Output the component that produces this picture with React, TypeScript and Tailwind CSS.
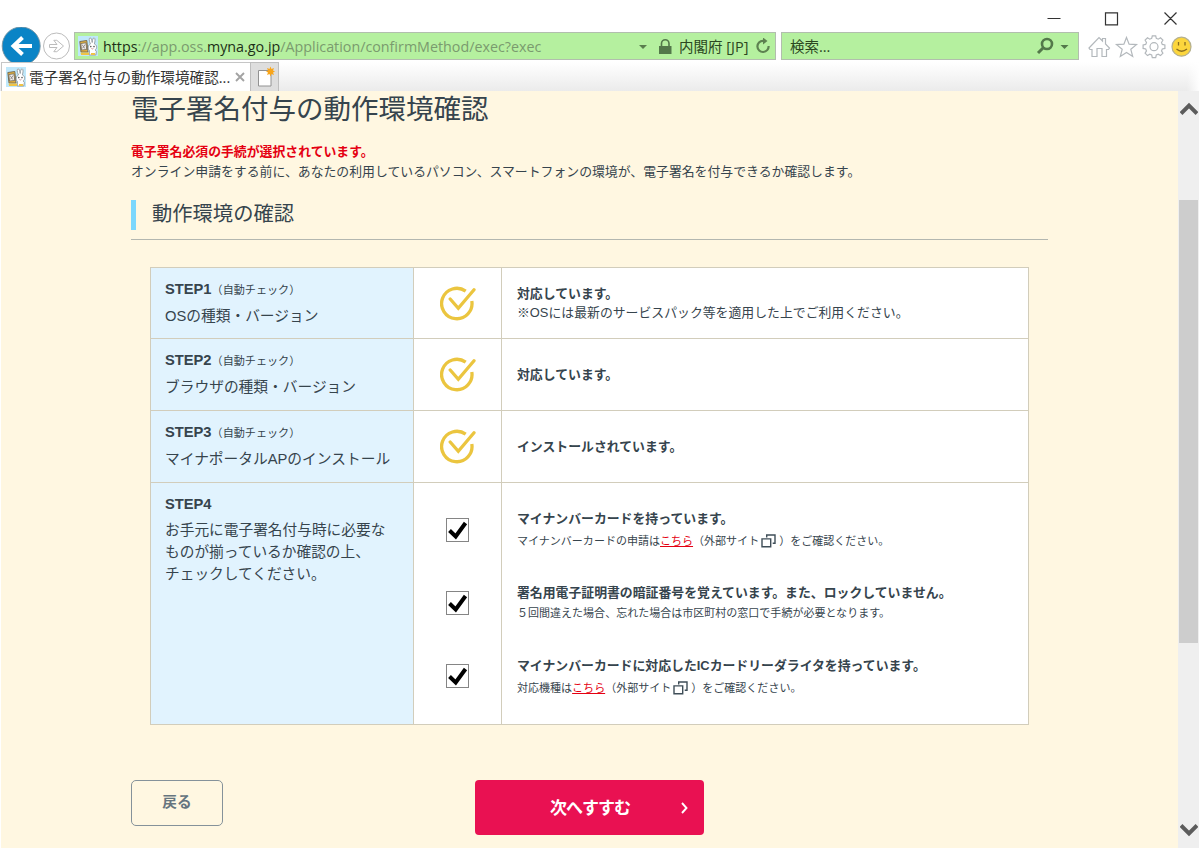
import React from "react";

const jp = "font-['Liberation_Sans','Noto_Sans_CJK_JP',sans-serif]";
const ui = "font-['Open_Sans','Noto_Sans_CJK_JP',sans-serif]";

function Favicon() {
  return (
    <svg width="20" height="20" viewBox="0 0 20 20" className="block shrink-0">
      <rect width="20" height="20" fill="#bfe8fb" />
      <path d="M1.800 5.500 8.800 4.500 10 16H3z" fill="#e9b43a" stroke="#6b6355" strokeWidth=".9" />
      <path d="M2.800 7.500 8 6.800l.700 6.700-5.200.500z" fill="#f3efec" stroke="#6b6355" strokeWidth=".8" />
      <path d="m4 8.500 2.800 4M7.300 8.300l-2.800 4" stroke="#8b8583" strokeWidth=".9" />
      <path d="M12.400 8C10.800 4.500 11 2 12 1.800c1.200-.200 1.900 2.400 2.200 4.700C14.400 4 15 1.600 16.200 1.900c1.300.400.900 3.600.200 6 2.600 1.200 3 4.400.800 6l1.200 1.600-.600 3.500h-6.600l.300-4.500c-2-1.300-1.700-5.200.900-6.500z" fill="#fff" stroke="#939a9e" strokeWidth=".9" />
      <circle cx="12.800" cy="10.600" r=".8" fill="#555" />
      <circle cx="16" cy="10.600" r=".8" fill="#555" />
      <path d="M13.400 12.500q1 .900 2 0" fill="none" stroke="#c07a80" strokeWidth=".8" />
      <path d="M2.500 16.500h8.500v2.500H3.200zM13 17h4v2h-4z" fill="#f0c445" />
    </svg>
  );
}

function DoneIcon() {
  return (
    <svg width="36" height="35" viewBox="0 0 36 35" className="block" fill="none" stroke="#ebc53f" strokeWidth="3.300" strokeLinecap="round" strokeLinejoin="miter">
      <path d="M25.700 5.200A15.200 15.200 0 1 0 31.800 15" strokeLinecap="butt" />
      <path d="m10.200 13 8.100 9.300L34 3.800" />
    </svg>
  );
}

function CheckedBox() {
  return (
    <div className="flex h-[24px] w-[23px] items-center justify-center border border-[#858585] bg-white">
      <svg width="21" height="22" viewBox="0 0 21 22" className="block">
        <path d="m2.500 11.500 6.200 6L18.500 4" fill="none" stroke="#000" strokeWidth="4" />
      </svg>
    </div>
  );
}

function External() {
  return (
    <svg width="15" height="14" viewBox="0 0 15 14" className="ml-[2px] mr-[3px] inline-block align-[-3px]" fill="none" stroke="#3f4e58" strokeWidth="1.400">
      <path d="M5.700 3.500V1h8.300v8.200h-2.300" />
      <path d="M1 4.900h8.700v7.900H1z" />
    </svg>
  );
}

function StepRow({ step, name, children }: { step: string; name: string; children: React.ReactNode }) {
  return (
    <>
      <div className="flex flex-col border-t border-[#d2cdbb] bg-[#e1f3fe] pl-[14px] pt-[9px]">
        <div className="flex h-[24px] items-center whitespace-nowrap">
          <b className="text-[14.700px]">{step}</b>
          <span className="pt-[2px] text-[11.100px] leading-[24px]">（自動チェック）</span>
        </div>
        <div className="mt-[3px] whitespace-nowrap text-[14.720px] leading-[24px]">{name}</div>
      </div>
      <div className="flex items-center justify-center border-l border-t border-[#d2cdbb] bg-white">
        <DoneIcon />
      </div>
      <div className="flex flex-col justify-center border-l border-t border-[#d2cdbb] bg-white pl-[15px] text-[12.870px] leading-[19px]">
        {children}
      </div>
    </>
  );
}

function Browser() {
  return (
    <header className={`${ui} flex h-[91px] shrink-0 flex-col bg-white`}>
      <div className="flex h-[27px] justify-end">
        <svg width="160" height="27" viewBox="1040 0 160 27" fill="none" stroke="#333" strokeWidth="1.200" className="block">
          <path d="M1047.500 18.500h13M1105.500 12.800h12v12h-12zM1164.500 12.500l12 12M1176.500 12.500l-12 12" />
        </svg>
      </div>
      <div className="flex h-[35px]">
        <svg width="74" height="35" viewBox="0 27 74 35" className="block shrink-0">
          <circle cx="21.200" cy="46" r="19" fill="#0a84c6" stroke="#75929f" strokeWidth=".9" />
          <path d="M32 46H14M22.500 37.500 13.500 46l9 8.500" fill="none" stroke="#fff" strokeWidth="4" />
          <circle cx="56.500" cy="46" r="13" fill="#fff" stroke="#bcbcbc" />
          <path d="M49.500 44.500h7.500l-3.200-4.200h3l6.700 5.700-6.700 5.700h-3l3.200-4.200h-7.500z" fill="#fff" stroke="#bcbcbc" />
        </svg>
        <div className="mt-[5px] flex h-[28px] w-[702px] items-center border border-[#b2beae] bg-[#b5f09f] pl-[3px] text-[14.300px] text-[#7a9b6e]">
          <Favicon />
          <span className="ml-[5px] w-[535px] whitespace-nowrap pt-[2px]">
            <span className="text-[#1d2f17]">https</span>://app.oss.<span className="text-[#1d2f17]">myna.go.jp</span>/Application/confirmMethod/exec?exec
          </span>
          <svg width="42" height="28" viewBox="638 32 42 28" className="block shrink-0">
            <path d="M639 45h8l-4 4z" fill="#5a7d4e" />
            <path d="M659 46h12.500v8H659z" fill="#53784a" />
            <path d="M661.500 46v-2.500a3.700 3.700 0 0 1 7.500 0V46" fill="none" stroke="#53784a" strokeWidth="1.600" />
          </svg>
          <span className="ml-[-1px] w-[76px] whitespace-nowrap pt-[1px] text-[14.500px] text-[#2b4721]">内閣府 [JP]</span>
          <svg width="16" height="16" viewBox="0 0 16 16" className="block shrink-0" fill="none" stroke="#5d8150" strokeWidth="2.200">
            <path d="M9 2.800H8A5.600 5.600 0 1 0 13.600 8" />
            <path d="m8-.500 4.500 3.500-4.500 3.500z" fill="#5d8150" stroke="none" />
          </svg>
        </div>
        <div className="ml-[5px] mt-[5px] flex h-[28px] w-[298px] items-center justify-between border border-[#b2beae] bg-[#b5f09f] pl-[8px] pr-[8px] text-[14.500px] text-[#2b4721]">
          <span className="pt-[2px]">検索...</span>
          <svg width="34" height="20" viewBox="1036 36 34 20" className="block" fill="none" stroke="#53784a">
            <circle cx="1047" cy="44" r="5" strokeWidth="2.600" />
            <path d="m1043.500 47.500-5.500 5.500" strokeWidth="3" />
            <path d="M1060.500 45h8l-4 4z" fill="#53784a" stroke="none" />
          </svg>
        </div>
        <svg width="121" height="35" viewBox="1079 27 121 35" className="block shrink-0" fill="none" stroke="#b3b8bc" strokeWidth="1.200">
          <path d="m1089 48 10-10.500 3.500 3.500v-2.500h3v5.500l4 4-1 1.500h-2V56.500h-4.500v-8h-5v8h-5V49.500h-2z" />
          <path d="m1126.500 37.500 2.600 6.700 7.400.400-5.700 4.700 1.900 7.200-6.200-4-6.200 4 1.900-7.200-5.700-4.700 7.400-.400z" />
          <path d="m1152.300 37 3.400 0 .600 2.600 1.900.8 2.300-1.400 2.400 2.400-1.400 2.300.8 1.900 2.600.600v3.400l-2.600.600-.8 1.900 1.400 2.300-2.400 2.400-2.300-1.400-1.900.8-.600 2.600h-3.400l-.600-2.600-1.900-.8-2.300 1.400-2.400-2.400 1.400-2.300-.8-1.900-2.600-.600v-3.400l2.600-.600.8-1.900-1.400-2.300 2.400-2.400 2.300 1.400 1.900-.8z" transform="translate(0 -1.200)" />
          <circle cx="1154" cy="46.700" r="4" />
          <circle cx="1181.500" cy="46.700" r="9.500" fill="#fcd63d" stroke="#b5b08e" />
          <path d="M1178.500 42v3.500M1185 42v3.500M1176.500 49q5 4.500 10.500 0" stroke="#8a6d20" strokeWidth="1.300" />
        </svg>
      </div>
      <div className="flex h-[29px] bg-gradient-to-b from-white to-[#ebebeb]">
        <div className="ml-[1px] flex h-[29px] w-[249px] items-center border-l border-t border-[#c6c6c6] bg-white pl-[4px] text-[#333]">
          <Favicon />
          <span className="ml-[3px] w-[204px] whitespace-nowrap pt-[2px] text-[14.600px]">電子署名付与の動作環境確認...</span>
          <svg width="10" height="10" viewBox="0 0 10 10" className="ml-[2px] block" stroke="#a3a3a3" strokeWidth="1.900">
            <path d="m1 1 8 8M9 1 1 9" />
          </svg>
        </div>
        <div className="flex w-[29px] items-center justify-center border border-b-0 border-[#bebebe] bg-[#dedede]">
          <svg width="20" height="22" viewBox="0 0 20 22" className="block">
            <path d="M3.500 4.500h12.500v15.500H3.500z" fill="#fff" stroke="#929292" />
            <path d="m15.500.5 1 2.500 2.500-1-1 2.500 2 1-2 1 1 2.500-2.500-1-1 2.500-1-2.500-2.500 1 1-2.500-2-1 2-1-1-2.500 2.500 1z" fill="#f8a51b" />
          </svg>
        </div>
        <div className="flex-1" />
        <div className="w-[13px] bg-gradient-to-r from-white/0 to-white" />
      </div>
    </header>
  );
}

export default function App() {
  return (
    <div className={`${jp} flex h-[849px] w-[1200px] flex-col overflow-hidden bg-white text-[#36444d]`} lang="ja">
      <Browser />
      <div className="ml-[1px] flex h-[757px] w-[1198px] bg-[#fff7e1]">
        <main className="flex w-[1177px] flex-col pl-[130px]">
          <h1 className="h-[51px] whitespace-nowrap pt-[1px] text-[27.500px] leading-[36px]">電子署名付与の動作環境確認</h1>
          <p className="whitespace-nowrap text-[12.860px] font-bold leading-[19px] text-[#e50012]">電子署名必須の手続が選択されています。</p>
          <p className="whitespace-nowrap pt-[1px] text-[12.860px] leading-[19px]">
            オンライン申請をする前に、あなたの利用しているパソコン、スマートフォンの環境が、電子署名を付与できるか確認します。
          </p>
          <div className="mt-[19px] h-[40px] w-[917px] border-b border-[#b3b7b0]">
            <h2 className="h-[30px] border-l-[5px] border-[#7bd7fd] pl-[16px] text-[20.300px] leading-[28px]">動作環境の確認</h2>
          </div>
          <section className="ml-[19px] mt-[27px] grid h-[458px] w-[879px] grid-cols-[262px_88px_1fr] grid-rows-[71px_72px_72px_1fr] border-b border-l border-r border-[#d2cdbb]">
            <StepRow step="STEP1" name="OSの種類・バージョン">
              <b>対応しています。</b>
              <span>※OSには最新のサービスパック等を適用した上でご利用ください。</span>
            </StepRow>
            <StepRow step="STEP2" name="ブラウザの種類・バージョン">
              <b>対応しています。</b>
            </StepRow>
            <StepRow step="STEP3" name="マイナポータルAPのインストール">
              <b>インストールされています。</b>
            </StepRow>
            <div className="border-t border-[#d2cdbb] bg-[#e1f3fe] pl-[14px] pt-[10px] text-[14.700px] leading-[22px]">
              <b className="block h-[26px]">STEP4</b>
              お手元に電子署名付与時に必要な
              <br />
              ものが揃っているか確認の上、
              <br />
              チェックしてください。
            </div>
            <div className="flex flex-col items-center gap-[49px] border-l border-t border-[#d2cdbb] bg-white pt-[35px]">
              <CheckedBox />
              <CheckedBox />
              <CheckedBox />
            </div>
            <div className="border-l border-t border-[#d2cdbb] bg-white pl-[15px] pt-[26px] text-[11.030px]">
              <div className="h-[74px]">
                <b className="block h-[22px] text-[12.870px] leading-[20px]">マイナンバーカードを持っています。</b>
                <p className="whitespace-nowrap leading-[20px]">
                  マイナンバーカードの申請は<a className="text-[#e50012] underline">こちら</a>（外部サイト<External />）をご確認ください。
                </p>
              </div>
              <div className="h-[73px]">
                <b className="block h-[20px] text-[12.870px] leading-[20px]">署名用電子証明書の暗証番号を覚えています。また、ロックしていません。</b>
                <p className="whitespace-nowrap leading-[20px]">５回間違えた場合、忘れた場合は市区町村の窓口で手続が必要となります。</p>
              </div>
              <div>
                <b className="block h-[22px] text-[12.870px] leading-[20px]">マイナンバーカードに対応したICカードリーダライタを持っています。</b>
                <p className="whitespace-nowrap leading-[20px]">
                  対応機種は<a className="text-[#e50012] underline">こちら</a>（外部サイト<External />）をご確認ください。
                </p>
              </div>
            </div>
          </section>
          <div className="mt-[55px] flex items-start">
            <button className="h-[46px] w-[92px] rounded-[5px] border border-[#85929a] pb-[1px] text-[14.700px] font-bold text-[#66757f]">戻る</button>
            <button className="ml-[252px] flex h-[55px] w-[229px] items-center rounded-[4px] bg-[#e91152] pl-[75px] pr-[15px] text-[17px] font-bold text-white">
              <span className="w-[131px] whitespace-nowrap pt-[2px] text-left tracking-[-1px]">次へすすむ</span>
              <svg width="8" height="12" viewBox="0 0 8 12" className="block" fill="none" stroke="#fff" strokeWidth="1.900">
                <path d="m1 1 4.500 5L1 11" />
              </svg>
            </button>
          </div>
        </main>
        <div className="flex w-[21px] flex-col items-center justify-between bg-[#efefef]">
          <div className="flex h-[109px] items-start pt-[11px]">
            <svg width="18" height="14" viewBox="0 0 18 14" className="block">
              <path d="m1 11.500 8-8 8 8" fill="none" stroke="#5c5c5c" strokeWidth="4" />
            </svg>
          </div>
          <div className="h-[443px] w-[19px] bg-[#cdcdcd]" />
          <div className="flex h-[205px] items-end pb-[11px]">
            <svg width="18" height="14" viewBox="0 0 18 14" className="block">
              <path d="m1 2.500 8 8 8-8" fill="none" stroke="#5c5c5c" strokeWidth="4" />
            </svg>
          </div>
        </div>
      </div>
    </div>
  );
}
